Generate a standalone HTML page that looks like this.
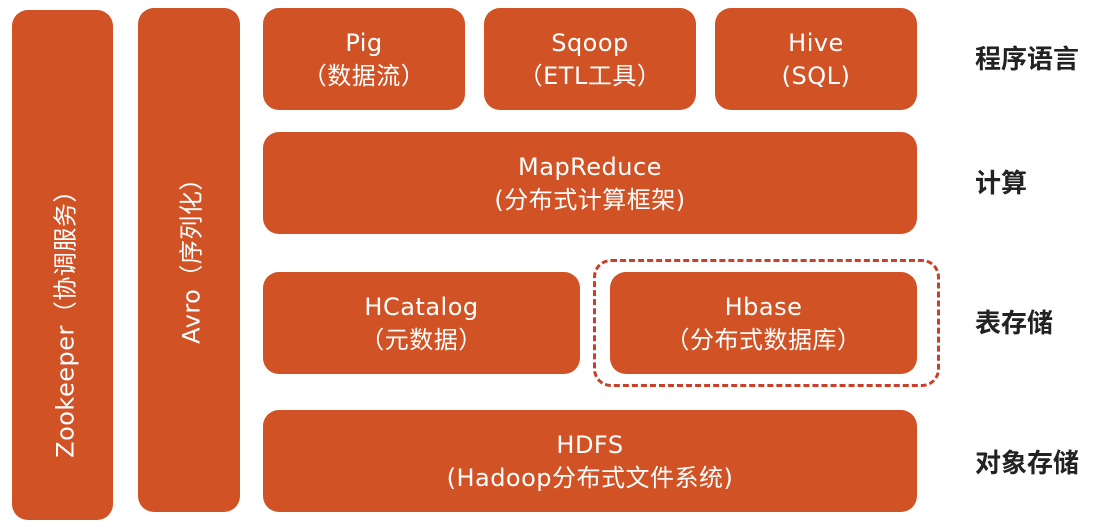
<!DOCTYPE html>
<html><head><meta charset="utf-8"><style>
body{margin:0;width:1096px;height:528px;background:#fff;position:relative;overflow:hidden;font-family:"DejaVu Sans","Noto Sans CJK SC",sans-serif}
.b{position:absolute;background:#D05225;border-radius:16px;color:#fff;display:flex;flex-direction:column;align-items:center;justify-content:center;font-size:24px;line-height:33px;text-align:center;letter-spacing:0.5px;padding-top:2px;box-sizing:border-box}
.v{position:absolute;color:#fff;font-size:24px;letter-spacing:0.5px;white-space:nowrap;transform:translate(-50%,-50%) rotate(-90deg)}
.l{position:absolute;left:975px;font-size:26px;font-weight:bold;color:#222;font-family:"Noto Sans CJK SC",sans-serif;line-height:30px}
.d{position:absolute;left:593px;top:259px;width:341px;height:122px;border:3px dashed #C8402A;border-radius:18px}
</style></head><body>
<div class="b" style="left:12px;top:10px;width:101px;height:510px"></div>
<div class="v" style="left:63px;top:318px">Zookeeper（协调服务）</div>
<div class="b" style="left:138px;top:8px;width:102px;height:504px"></div>
<div class="v" style="left:189px;top:255px">Avro（序列化）</div>
<div class="b" style="left:263px;top:8px;width:202px;height:102px">Pig<br>（数据流）</div>
<div class="b" style="left:484px;top:8px;width:212px;height:102px">Sqoop<br>（ETL工具）</div>
<div class="b" style="left:715px;top:8px;width:202px;height:102px">Hive<br>(SQL)</div>
<div class="b" style="left:263px;top:132px;width:654px;height:102px">MapReduce<br>(分布式计算框架)</div>
<div class="b" style="left:263px;top:272px;width:317px;height:102px">HCatalog<br>（元数据）</div>
<div class="d"></div>
<div class="b" style="left:610px;top:272px;width:307px;height:102px">Hbase<br>（分布式数据库）</div>
<div class="b" style="left:263px;top:410px;width:654px;height:102px">HDFS<br>(Hadoop分布式文件系统)</div>
<div class="l" style="top:43px">程序语言</div>
<div class="l" style="top:167px">计算</div>
<div class="l" style="top:307px">表存储</div>
<div class="l" style="top:447px">对象存储</div>
</body></html>
